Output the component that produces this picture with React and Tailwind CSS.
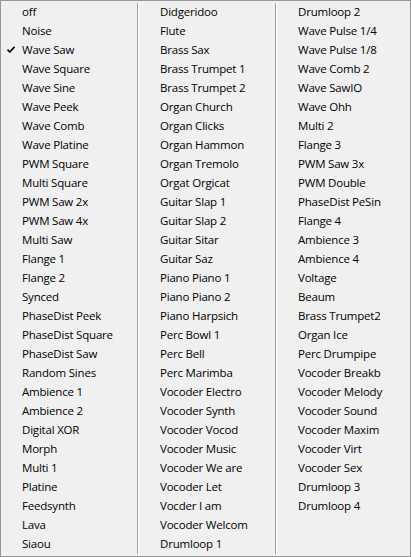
const columns = [
  [
    'off', 'Noise', 'Wave Saw', 'Wave Square', 'Wave Sine', 'Wave Peek', 'Wave Comb',
    'Wave Platine', 'PWM Square', 'Multi Square', 'PWM Saw 2x', 'PWM Saw 4x', 'Multi Saw',
    'Flange 1', 'Flange 2', 'Synced', 'PhaseDist Peek', 'PhaseDist Square', 'PhaseDist Saw',
    'Random Sines', 'Ambience 1', 'Ambience 2', 'Digital XOR', 'Morph', 'Multi 1', 'Platine',
    'Feedsynth', 'Lava', 'Siaou',
  ],
  [
    'Didgeridoo', 'Flute', 'Brass Sax', 'Brass Trumpet 1', 'Brass Trumpet 2', 'Organ Church',
    'Organ Clicks', 'Organ Hammon', 'Organ Tremolo', 'Orgat Orgicat', 'Guitar Slap 1',
    'Guitar Slap 2', 'Guitar Sitar', 'Guitar Saz', 'Piano Piano 1', 'Piano Piano 2',
    'Piano Harpsich', 'Perc Bowl 1', 'Perc Bell', 'Perc Marimba', 'Vocoder Electro',
    'Vocoder Synth', 'Vocoder Vocod', 'Vocoder Music', 'Vocoder We are', 'Vocoder Let',
    'Vocder I am', 'Vocoder Welcom', 'Drumloop 1',
  ],
  [
    'Drumloop 2', 'Wave Pulse 1/4', 'Wave Pulse 1/8', 'Wave Comb 2', 'Wave SawIO', 'Wave Ohh',
    'Multi 2', 'Flange 3', 'PWM Saw 3x', 'PWM Double', 'PhaseDist PeSin', 'Flange 4',
    'Ambience 3', 'Ambience 4', 'Voltage', 'Beaum', 'Brass Trumpet2', 'Organ Ice',
    'Perc Drumpipe', 'Vocoder Breakb', 'Vocoder Melody', 'Vocoder Sound', 'Vocoder Maxim',
    'Vocoder Virt', 'Vocoder Sex', 'Drumloop 3', 'Drumloop 4',
  ],
]

const checked = 'Wave Saw'

function CheckMark() {
  return (
    <svg viewBox="0 0 8 7" className="absolute left-[6px] top-[5px] h-[7px] w-[8px]">
      <path d="M0.5 3.5 L2.8 6 L7.5 0.8" fill="none" stroke="#000" strokeWidth="1.6" />
    </svg>
  )
}

function MenuColumn({ items, width }) {
  return (
    <div className={`flex flex-col py-[2px] ${width}`}>
      {items.map((item) => (
        <div key={item} className="relative h-[19px] pl-[21px] leading-[17px] whitespace-nowrap">
          {item === checked ? <CheckMark /> : null}
          {item}
        </div>
      ))}
    </div>
  )
}

function Separator() {
  return (
    <div className="my-[2px] flex shrink-0">
      <div className="w-px bg-[#a0a0a0]" />
      <div className="w-px bg-white" />
    </div>
  )
}

export default function App() {
  return (
    <div
      className="flex h-[557px] w-[411px] border border-[#979797] bg-[#f0f0f0] text-[11.5px] tracking-[-0.2px] text-black"
      style={{ fontFamily: '"Open Sans", "Noto Sans", sans-serif' }}
    >
      <MenuColumn items={columns[0]} width="w-[136px]" />
      <Separator />
      <MenuColumn items={columns[1]} width="w-[136px]" />
      <Separator />
      <MenuColumn items={columns[2]} width="flex-1" />
    </div>
  )
}
